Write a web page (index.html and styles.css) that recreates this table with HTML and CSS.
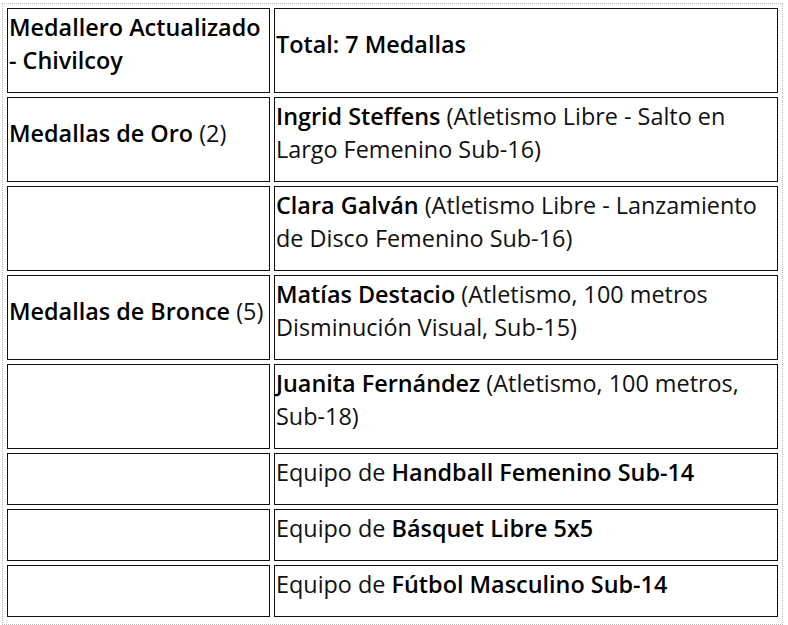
FILE: index.html
```html
<!DOCTYPE html>
<html lang="es">
<head>
<meta charset="utf-8">
<title>Medallero Actualizado - Chivilcoy</title>
<link rel="stylesheet" href="styles.css">
</head>
<body>
<div class="frame">
<table class="medals">
<colgroup><col class="c1"><col class="c2"></colgroup>
<tbody>
<tr><td><b>Medallero Actualizado - Chivilcoy</b></td><td><b>Total: 7 Medallas</b></td></tr>
<tr><td><b>Medallas de Oro</b> (2)</td><td><b>Ingrid Steffens</b> (Atletismo Libre - Salto en Largo Femenino Sub-16)</td></tr>
<tr><td></td><td><b>Clara Galván</b> (Atletismo Libre - Lanzamiento de Disco Femenino Sub-16)</td></tr>
<tr><td><b>Medallas de Bronce</b> (5)</td><td><b>Matías Destacio</b> (Atletismo, 100 metros Disminución Visual, Sub-15)</td></tr>
<tr><td></td><td><b>Juanita Fernández</b> (Atletismo, 100 metros, Sub-18)</td></tr>
<tr><td></td><td>Equipo de <b>Handball Femenino Sub-14</b></td></tr>
<tr><td></td><td>Equipo de <b>Básquet Libre 5x5</b></td></tr>
<tr><td></td><td>Equipo de <b>Fútbol Masculino Sub-14</b></td></tr>
</tbody>
</table>
</div>
</body>
</html>
```

FILE: styles.css
```css
html, body {
  margin: 0;
  padding: 0;
  background: #fff;
}
body {
  font-family: "Open Sans", "Noto Sans", sans-serif;
  font-size: 23.4px;
  line-height: 33px;
  color: #111;
}
.frame {
  margin: 3px 0 0 2px;
  width: 779px;
  border: 1px dotted #b8b8b8;
  padding: 0 0 3px 0;
}
.medals {
  width: 779px;
  table-layout: fixed;
  border-collapse: separate;
  border-spacing: 4px 4px;
}
.medals col.c1 { width: 263px; }
.medals td {
  box-sizing: border-box;
  border: 1px solid #111;
  padding: 2px 3px 15px 1px;
  vertical-align: middle;
}
.medals td:empty {
  height: 52px;
}
.medals b {
  font-weight: 600;
  color: #000;
}
```
